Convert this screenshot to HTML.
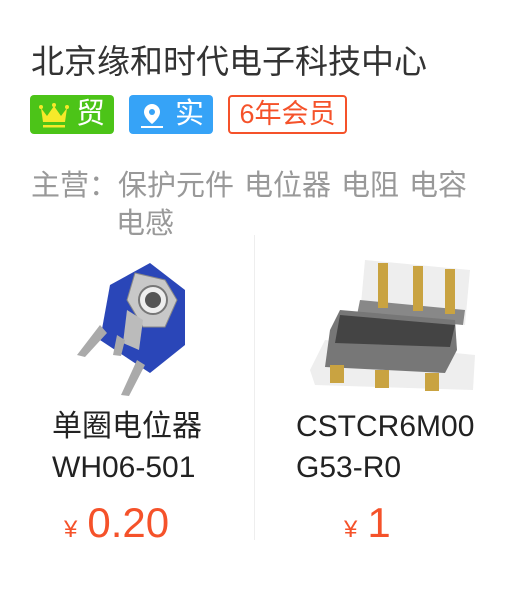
<!DOCTYPE html>
<html><head><meta charset="utf-8"><style>
body{margin:0;width:527px;height:591px;background:#fff;font-family:"Liberation Sans","Noto Sans CJK SC",sans-serif;position:relative;overflow:hidden}
.a{position:absolute;white-space:nowrap}
.b{position:absolute;top:95px;height:39px;border-radius:4px;color:#fff;font-size:29px;line-height:39px}
.g{display:inline-block;width:10px}
</style></head><body>
<div class="a" style="left:31px;top:35px;font-size:33px;color:#333">北京缘和时代电子科技中心</div>
<div class="b" style="left:30px;width:84px;background:#4cc418">
<svg style="position:absolute;left:8px;top:7px" width="32" height="27" viewBox="0 0 32 27"><path d="M3 6 L9 14 L16 4 L23 14 L29 6 L27 20 L5 20 Z" fill="#f6e92a"/><circle cx="3" cy="5" r="2" fill="#f6e92a"/><circle cx="16" cy="3" r="2" fill="#f6e92a"/><circle cx="29" cy="5" r="2" fill="#f6e92a"/><rect x="5" y="23" width="22" height="2.5" fill="#f6e92a"/></svg>
<span style="position:absolute;left:46px">贸</span></div>
<div class="b" style="left:129px;width:84px;background:#36a3f7">
<svg style="position:absolute;left:10px;top:7px" width="26" height="27" viewBox="0 0 26 27"><path d="M13 2a8 8 0 0 0-8 8c0 6 8 12 8 12s8-6 8-12a8 8 0 0 0-8-8z" fill="#fff"/><circle cx="13" cy="10" r="3" fill="#36a3f7"/><rect x="2" y="24" width="22" height="2" fill="#fff"/></svg>
<span style="position:absolute;left:46px">实</span></div>
<div class="b" style="left:228px;width:115px;height:35px;border:2px solid #f5522a;color:#f5522a;line-height:35px;text-align:center;font-size:27px">6年会员</div>
<div class="a" style="left:31px;top:167px;font-size:29px;color:#999;line-height:38px">主营：保护元件<span class="g"></span>电位器<span class="g"></span>电阻<span class="g"></span>电容</div>
<div class="a" style="left:116px;top:205px;font-size:29px;color:#999;line-height:38px">电感</div>
<div class="a" style="left:254px;top:235px;width:1px;height:305px;background:#eee"></div>
<svg class="a" style="left:55px;top:255px" width="160" height="145" viewBox="0 0 160 145">
<polygon points="55,30 95,8 130,35 130,90 95,118 45,85" fill="#2a46b8"/>
<polygon points="80,18 110,25 122,45 110,72 88,72 72,45" fill="#c8c8c8" stroke="#888"/>
<circle cx="98" cy="45" r="14" fill="#eee" stroke="#777" stroke-width="2"/><circle cx="98" cy="45" r="8" fill="#555"/>
<polygon points="72,55 88,65 84,95 68,88" fill="#bbb"/>
<path d="M45 70 L22 100 L30 102 L52 78Z M62 80 L58 100 L66 101 L70 85Z M82 105 L66 140 L74 141 L90 110Z" fill="#aaa"/>
</svg>
<svg class="a" style="left:305px;top:255px" width="170" height="140" viewBox="0 0 170 140">
<polygon points="60,5 165,15 160,70 55,60" fill="#eee"/>
<polygon points="55,45 160,55 158,70 52,60" fill="#888"/>
<rect x="73" y="8" width="10" height="45" fill="#c9a341"/><rect x="108" y="11" width="10" height="45" fill="#c9a341"/><rect x="140" y="14" width="10" height="45" fill="#c9a341"/>
<polygon points="5,115 20,85 170,100 168,135 10,130" fill="#eee"/>
<polygon points="25,75 35,55 150,65 152,95 140,118 20,112" fill="#777"/>
<polygon points="35,60 150,70 145,92 30,88" fill="#444"/>
<rect x="25" y="110" width="14" height="18" fill="#c9a341"/><rect x="70" y="115" width="14" height="18" fill="#c9a341"/><rect x="120" y="118" width="14" height="18" fill="#c9a341"/>
</svg>
<div class="a" style="left:52px;top:406px;font-size:30px;color:#222;line-height:41px">单圈电位器<br>WH06-501</div>
<div class="a" style="left:296px;top:406px;font-size:30px;color:#222;line-height:41px">CSTCR6M00<br>G53-R0</div>
<div class="a" style="left:64px;top:499px;color:#f5522a;font-size:42px"><span style="font-size:24px;margin-right:10px">¥</span>0.20</div>
<div class="a" style="left:344px;top:499px;color:#f5522a;font-size:42px"><span style="font-size:24px;margin-right:10px">¥</span>1</div>
</body></html>
